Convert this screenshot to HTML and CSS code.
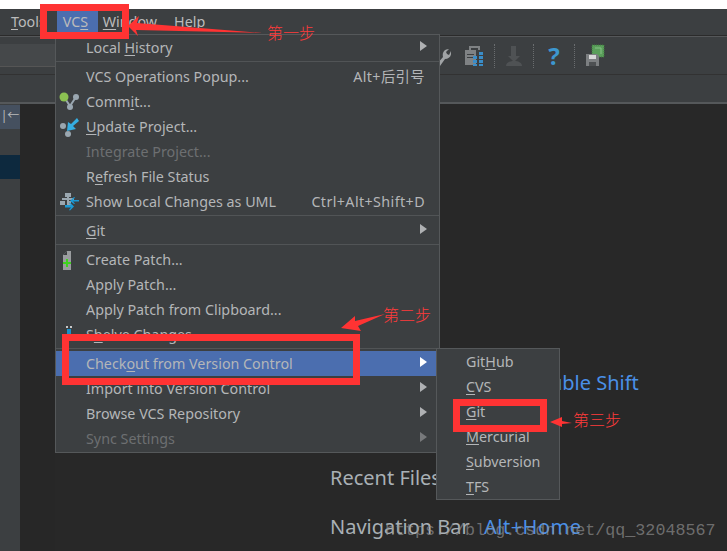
FILE: index.html
```html
<!DOCTYPE html>
<html lang="zh">
<head>
<meta charset="utf-8">
<title>VCS menu</title>
<link rel="stylesheet" href="styles.css">
</head>
<body>
<div class="app">
  <nav class="menubar">
    <span class="mb-item tools"><u>T</u>ools</span>
    <span class="mb-item vcs">VC<u>S</u></span>
    <span class="mb-item"><u>W</u>indow</span>
    <span class="mb-item"><u>H</u>elp</span>
  </nav>
  <div class="toolbar">
    <div class="field"></div>
    <div class="tools-right">
      <svg class="ic wrench" width="20" height="22" viewBox="0 0 20 22"><path d="M6 19 L12 12 C11 8 13 4 18 4 L15 7 L16 9 L18 10 L20 6 C21 11 18 14 14 14 L9 21 Z" fill="#a0a3a5"/><rect x="4" y="5" width="5" height="6" fill="#d58f30"/></svg>
      <svg class="ic" width="20" height="22" viewBox="0 0 20 22"><path d="M5 1h11v4h-2V3H7v2H5z" fill="#7f8284"/><rect x="1" y="5" width="11" height="15" fill="#7f8284"/><rect x="3" y="9" width="7" height="1" fill="#3c3f41"/><rect x="3" y="12" width="7" height="1" fill="#3c3f41"/><g fill="#3a8dc8"><rect x="9" y="11" width="4" height="3"/><rect x="15" y="11" width="4" height="3"/><rect x="9" y="15" width="4" height="3"/><rect x="15" y="15" width="4" height="3"/><rect x="9" y="19" width="4" height="2"/><rect x="15" y="19" width="4" height="2"/><rect x="15" y="7" width="4" height="3"/></g></svg>
      <span class="dots"></span>
      <svg class="ic" width="18" height="22" viewBox="0 0 18 22"><path d="M6 1h5v10h4l-6 6-6-6h3z" fill="#4f5254"/><path d="M1 21c0-3 3-5 8-5s8 2 8 5z" fill="#4f5254"/></svg>
      <span class="dots"></span>
      <span class="help">?</span>
      <span class="dots"></span>
      <svg class="ic" width="20" height="24" viewBox="0 0 20 24"><rect x="7" y="1" width="12" height="12" fill="#5a9e5a" stroke="#3f7a3f" stroke-dasharray="1 1"/><path d="M10 4h6v6" fill="none" stroke="#86c286"/><path d="M1 10h11l2 2v10H1z" fill="#7c7f81"/><rect x="4" y="11" width="7" height="4" fill="#d8d8d8"/><rect x="4" y="18" width="7" height="4" fill="#4d5052"/></svg>
    </div>
  </div>
  <div class="navbar"></div>
  <main class="workspace">
    <aside class="side">
      <div class="side-btn">|←</div>
      <div class="side-sel"></div>
    </aside>
    <div class="gutter"></div>
    <section class="editor">
      <p class="hint shift">Search Everywhere <b>Double Shift</b></p>
      <p class="hint recent">Recent Files <b>Ctrl+E</b></p>
      <p class="hint navi">Navigation Bar <b>Alt+Home</b></p>
    </section>
  </main>
</div>

<div class="menu main-menu">
  <div class="row sub">Local <u>H</u>istory</div>
  <div class="sep"></div>
  <div class="row"><span>VCS Operations Popup...</span><span class="key">Alt+后引号</span></div>
  <div class="row"><svg class="mi" width="22" height="20" viewBox="0 0 22 20"><path d="M5 5l6 9 6-9" fill="none" stroke="#9aa7b0" stroke-width="2"/><circle cx="5" cy="5" r="4.500" fill="#8cc152"/><circle cx="17" cy="5" r="3" fill="#9aa7b0"/><circle cx="11" cy="15" r="3" fill="#9aa7b0"/></svg><span>Comm<u>i</u>t...</span></div>
  <div class="row"><svg class="mi" width="22" height="20" viewBox="0 0 22 20"><circle cx="4" cy="9" r="3" fill="#9aa7b0"/><circle cx="9" cy="17" r="3" fill="#9aa7b0"/><path d="M18 1l2 3-6 5 3 3-9 2 1-9 3 2z" fill="#35aee2"/></svg><span><u>U</u>pdate Project...</span></div>
  <div class="row off">Integrate Project...</div>
  <div class="row">R<u>e</u>fresh File Status</div>
  <div class="row"><svg class="mi" width="22" height="20" viewBox="0 0 22 20"><g fill="#9aa7b0"><rect x="6" y="1" width="6" height="4"/><rect x="1" y="9" width="5" height="4"/><rect x="8" y="9" width="4" height="4"/><rect x="8" y="5" width="2" height="4"/><rect x="3" y="6" width="12" height="2"/></g><path d="M20 8h-6l2-2.500-1-.5-4 4 4 3 1-.5-2-2h6zM6 13h6l-2-2 1-.5 4 4-4 4-1-.5 2-2.500H6z" fill="#1a9ad6"/></svg><span>Show Local Changes as UML</span><span class="key">Ctrl+Alt+Shift+D</span></div>
  <div class="sep"></div>
  <div class="row sub"><u>G</u>it</div>
  <div class="sep"></div>
  <div class="row"><svg class="mi" width="22" height="20" viewBox="0 0 22 20"><path d="M8 1h4v19H4V5z" fill="#9a9d9f"/><path d="M8 1v4H4z" fill="#3c3f41"/><path d="M7 9h2v3h3v2H9v3H7v-3H4v-2h3z" fill="#3fd21f"/></svg><span>Create Patch...</span></div>
  <div class="row">Apply Patch...</div>
  <div class="row">Apply Patch from Clipboard...</div>
  <div class="row"><svg class="mi" width="22" height="20" viewBox="0 0 22 20"><rect x="7" y="1" width="2" height="2" fill="#c8c8c8"/><rect x="11" y="1" width="2" height="2" fill="#c8c8c8"/><rect x="8" y="4" width="4" height="8" fill="#1a8fc8"/><rect x="3" y="11" width="15" height="5" fill="#9a9d9f"/></svg><span>S<u>h</u>elve Changes...</span></div>
  <div class="sep"></div>
  <div class="row sub active">Check<u>o</u>ut from Version Control</div>
  <div class="row sub">Import into Version Control</div>
  <div class="row sub">Browse VCS Repository</div>
  <div class="row sub off">Sync Settings</div>
</div>

<div class="menu sub-menu">
  <div class="row">Git<u>H</u>ub</div>
  <div class="row"><u>C</u>VS</div>
  <div class="row"><u>G</u>it</div>
  <div class="row"><u>M</u>ercurial</div>
  <div class="row"><u>S</u>ubversion</div>
  <div class="row"><u>T</u>FS</div>
</div>

<div class="redbox box-one"></div>
<div class="redbox box-two"></div>
<div class="redbox box-three"></div>

<svg class="arrows" width="727" height="551" viewBox="0 0 727 551">
  <path d="M128 26 L139 16 L137 23 L263 33 L136 30 L138 36 Z" fill="#f33"/>
  <path d="M341 328 L355 316 L355 321 L385 314 L358 326 L361 331 Z" fill="#f33"/>
  <path d="M550 422 L562 417 L562 421 L572 423 L562 424 L562 427 Z" fill="#f33"/>
</svg>
<span class="note note-one">第一步</span>
<span class="note note-two">第二步</span>
<span class="note note-three">第三步</span>
<span class="watermark">https://blog.csdn.net/qq_32048567</span>
</body>
</html>
```
FILE: styles.css
```css
* { box-sizing: border-box; }
html, body { margin: 0; height: 551px; overflow: hidden; background: #fff; }
body { font-family: "Noto Sans", "Noto Sans CJK SC", sans-serif; color: #bbb; position: relative; }
u { text-underline-offset: 2px; text-decoration-thickness: 1px; }

.app { margin-top: 9px; height: 542px; display: flex; flex-direction: column; background: #3c3f41; }
.menubar { height: 27px; display: flex; align-items: center; padding-left: 6px; font-size: 14.3px; border-bottom: 1px solid #2b2b2b; }
.mb-item { padding: 0 5px; height: 25px; line-height: 24px; margin-right: 7px; }
.mb-item.tools { margin-right: 6px; }
.mb-item.vcs { background: #4b6eaf; padding: 0 6px; margin-right: 0; width: 41px; }

.toolbar { height: 39px; display: flex; justify-content: space-between; align-items: center; border-top: 1px solid #555759; border-bottom: 1px solid #323232; }
.field { width: 55px; height: 23px; background: #45484a; border-bottom: 1px solid #555; }
.tools-right { display: flex; align-items: center; gap: 10px; padding-right: 122px; }
.ic { display: block; flex: none; }
.wrench { margin-right: 3px; }
.dots { width: 0; height: 24px; border-left: 1px dotted #6a6d6f; }
.help { color: #3d97cf; font-weight: 700; font-size: 24px; line-height: 24px; width: 16px; text-align: center; margin: 0 2px; }

.navbar { height: 29px; border-bottom: 2px solid #55585a; }
.workspace { flex: 1; display: flex; background: #282828; min-height: 0; }
.side { width: 20px; background: #3c3f41; padding-top: 1px; }
.side-btn { height: 24px; background: #45505f; color: #bbb; font-size: 12px; line-height: 22px; text-align: center; }
.side-sel { height: 24px; margin-top: 26px; background: #0d293e; }
.gutter { width: 35px; background: #272727; }
.editor { flex: 1; position: relative; background: #282828; }

.hint { position: absolute; margin: 0; left: 275px; white-space: nowrap; font-size: 20px; color: #a9b0b5; line-height: 26px; }
.hint b { font-weight: 400; color: #4a90e8; margin-left: 9px; }
.shift { top: 266px; }
.shift b { margin-left: 10px; }
.recent { top: 361px; }
.navi { top: 410px; }
.navi b { letter-spacing: .5px; }

.menu { position: absolute; background: #3c3f41; border: 1px solid #55585a; font-size: 14.3px; }
.main-menu { left: 55px; top: 34px; width: 385px; height: 419px; }
.sub-menu { left: 436px; top: 348px; width: 124px; height: 152px; }
.row { height: 25px; line-height: 25px; padding: 0 14px 1px 30px; display: flex; align-items: center; white-space: pre; position: relative; color: #b4b6b8; }
.row span:first-child:not(:only-child) { flex: 1; }
.row .mi + span { flex: 1; }
.key { letter-spacing: .4px; }
.main-menu .row > .mi { position: absolute; left: 3px; top: 3px; }
.sub-menu .row { padding-left: 29px; }
.sep { height: 3px; margin-top: 1px; border-top: 1px solid #515456; }
.off { color: #6d6f71; }
.active { background: #4b6eaf; }
.sub::after { content: ""; position: absolute; right: 12px; top: 6px; border-left: 7px solid #afb1b3; border-top: 5.5px solid transparent; border-bottom: 5.5px solid transparent; }
.sub.off::after { border-left-color: #77797b; }
.active::after { border-left-color: #fff; }

.redbox { position: absolute; border: 7px solid #ff3333; }
.box-one { left: 40px; top: 4px; width: 89px; height: 35px; }
.box-two { left: 62px; top: 334px; width: 298px; height: 51px; }
.box-three { left: 453px; top: 399px; width: 94px; height: 33px; }

.arrows { position: absolute; left: 0; top: 0; pointer-events: none; }
.note { position: absolute; color: #ff3b3b; font: 300 16px/20px "Noto Sans CJK SC", sans-serif; }
.note-one { left: 267px; top: 22px; }
.note-two { left: 383px; top: 304px; }
.note-three { left: 573px; top: 409px; }
.watermark { position: absolute; left: 385px; top: 521px; font: 16.7px/20px "Liberation Mono", monospace; color: rgba(150, 150, 150, .65); white-space: nowrap; }
```
